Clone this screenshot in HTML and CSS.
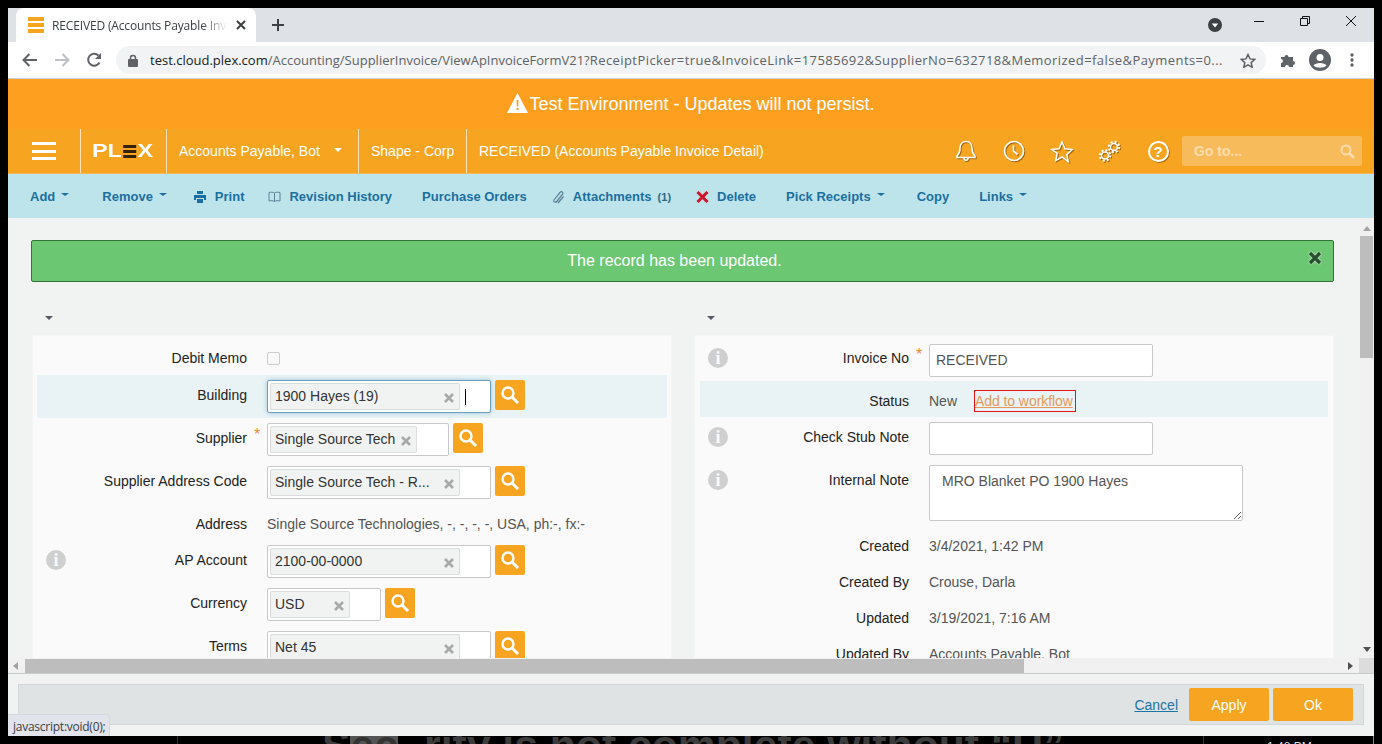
FILE: index.html
```html
<!DOCTYPE html>
<html lang="en">
<head>
    <meta charset="UTF-8">
    <title>RECEIVED (Accounts Payable Invoice Detail)</title>
    <link rel="stylesheet" href="styles.css">
</head>
<body>

<div class="window">

    <!-- browser tabs -->
    <div class="tabstrip">
        <div class="tab">
            <span class="favicon"><i></i><i></i><i></i></span>
            <span class="tab-title">RECEIVED (Accounts Payable Invoice Detail)</span>
            <svg class="tab-close" width="10" height="10" viewBox="0 0 10 10"><path d="M1 1l8 8M9 1l-8 8" stroke="#3c4043" stroke-width="2"/></svg>
        </div>
        <svg class="new-tab" width="14" height="14" viewBox="0 0 14 14"><path d="M7 1v12M1 7h12" stroke="#3c4043" stroke-width="2"/></svg>
        <svg class="tab-search" width="14" height="14" viewBox="0 0 14 14"><circle cx="7" cy="7" r="7" fill="#3c4043"/><path d="M3.8 5.5h6.4L7 9.6z" fill="#fff"/></svg>
        <svg class="win-btn" width="46" height="14" viewBox="0 0 46 14"><path d="M18 7.5h10" stroke="#111" stroke-width="1"/></svg>
        <svg class="win-btn" width="46" height="14" viewBox="0 0 46 14"><path d="M18.5 4.5h7v7h-7zM20.5 4.500v-2h7v7h-2" fill="none" stroke="#111"/></svg>
        <svg class="win-btn" width="46" height="14" viewBox="0 0 46 14"><path d="M18 2l10 10M28 2L18 12" stroke="#111"/></svg>
    </div>

    <!-- browser toolbar -->
    <div class="toolbar">
        <svg class="tool" width="16" height="14" viewBox="0 0 16 14"><path d="M15 7H2M7.500 1L1.500 7l6 6" fill="none" stroke="#5f6368" stroke-width="2"/></svg>
        <svg class="tool tool-forward" width="16" height="14" viewBox="0 0 16 14"><path d="M1 7h13M8.500 1l6 6-6 6" fill="none" stroke="#bdc1c6" stroke-width="2"/></svg>
        <svg class="tool tool-reload" width="16" height="16" viewBox="0 0 16 16"><path d="M13.500 10.500A6 6 0 1 1 12.500 3.500" fill="none" stroke="#5f6368" stroke-width="2"/><path d="M15 1v6H9z" fill="#5f6368"/></svg>
        <div class="address">
            <svg class="lock" width="10" height="13" viewBox="0 0 10 13"><path d="M2.500 6V4a2.500 2.500 0 0 1 5 0v2" fill="none" stroke="#5f6368" stroke-width="1.500"/><rect y="5" width="10" height="8" rx="1" fill="#5f6368"/></svg>
            <span class="url"><b>test.cloud.plex.com</b>/Accounting/SupplierInvoice/ViewApInvoiceFormV21?<span class="url-query">ReceiptPicker=true&amp;InvoiceLink=17585692&amp;SupplierNo=632718&amp;Memorized=false&amp;Payments=0...</span></span>
            <svg class="addr-star" width="16" height="15" viewBox="0 0 16 15"><path d="M8 1.500l2 4.400 4.800.5-3.600 3.200 1 4.700L8 11.900l-4.200 2.400 1-4.700L1.200 6.400 6 5.900z" fill="none" stroke="#5f6368" stroke-width="1.500"/></svg>
        </div>
        <svg class="tool tool-puzzle" width="16" height="16" viewBox="0 0 16 16"><path d="M1 5h3.500a2 2 0 1 1 4 0H13v4a2 2 0 1 1 0 4v2H9a2 2 0 1 0-4 0H1v-4a2 2 0 1 0 0-4z" fill="#5f6368"/></svg>
        <svg class="tool tool-avatar" width="22" height="22" viewBox="0 0 22 22"><circle cx="11" cy="11" r="11" fill="#5f6368"/><circle cx="11" cy="8.500" r="3.500" fill="#fff"/><path d="M4.500 16.500c2-3.500 11-3.500 13 0-3 3-10 3-13 0z" fill="#fff"/></svg>
        <svg class="tool tool-dots" width="4" height="14" viewBox="0 0 4 14"><circle cx="2" cy="2" r="1.700" fill="#5f6368"/><circle cx="2" cy="7" r="1.700" fill="#5f6368"/><circle cx="2" cy="12" r="1.700" fill="#5f6368"/></svg>
    </div>

    <div class="env-banner">
        <svg width="21" height="20" viewBox="0 0 21 20"><path d="M10.500 0L21 20H0z" fill="#fff"/><path d="M9.500 7h2l-.3 6.500H9.800zM9.500 15h2v2h-2z" fill="#ff9f20"/></svg>
        <span>Test Environment - Updates will not persist.</span>
    </div>

    <!-- plex header -->
    <div class="nav">
        <div class="nav-menu"><i></i><i></i><i></i></div>
        <div class="nav-logo"><span class="logo-inner">PL<span class="logo-e"><i></i><i></i><i></i></span>X</span></div>
        <div class="nav-user">Accounts Payable, Bot <span class="caret caret-white"></span></div>
        <div class="nav-item nav-shape">Shape - Corp</div>
        <div class="nav-item nav-title">RECEIVED (Accounts Payable Invoice Detail)</div>
        <div class="nav-icons">
            <span class="nav-icon"><svg width="22" height="24" viewBox="0 0 22 24"><path d="M11 2.500c-4 0-6 3-6 6.500 0 4-1 6-3 8v1.500h18V17c-2-2-3-4-3-8 0-3.500-2-6.500-6-6.500zM9 19c0 3 4 3 4 0" fill="none" stroke="#fff" stroke-width="1.500"/></svg></span>
            <span class="nav-icon"><svg width="22" height="22" viewBox="0 0 22 22"><circle cx="11" cy="11" r="9.500" fill="none" stroke="#fff" stroke-width="1.700"/><path d="M10.500 5.500V11l4 3.500" fill="none" stroke="#fff" stroke-width="1.700"/></svg></span>
            <span class="nav-icon"><svg width="24" height="23" viewBox="0 0 24 23"><path d="M12 2l3 6.700 7.200.8-5.400 4.900 1.500 7.200L12 17l-6.300 3.600 1.500-7.200L1.800 9.500 9 8.700z" fill="none" stroke="#fff" stroke-width="1.500"/></svg></span>
            <span class="nav-icon"><svg width="24" height="24" viewBox="0 0 24 24"><g fill="none" stroke="#fff"><circle cx="16" cy="8" r="3.500" stroke-width="1.500"/><circle cx="16" cy="8" r="5.200" stroke-width="2" stroke-dasharray="2 2.080"/><circle cx="7" cy="16.500" r="3.500" stroke-width="1.500"/><circle cx="7" cy="16.500" r="5.200" stroke-width="2" stroke-dasharray="2 2.080"/></g></svg></span>
            <span class="nav-icon"><span class="help">?</span></span>
        </div>
        <div class="goto">
            <span>Go to...</span>
            <svg width="15" height="15" viewBox="0 0 15 15"><circle cx="6" cy="6" r="4.500" fill="none" stroke="#fbdcae" stroke-width="2"/><path d="M9.500 9.500L14 14" stroke="#fbdcae" stroke-width="2.500"/></svg>
        </div>
    </div>

    <!-- page actions -->
    <div class="actions">
        <a class="action action-first">Add <span class="caret"></span></a>
        <a class="action">Remove <span class="caret"></span></a>
        <a class="action action-icon action-print"><svg width="12" height="12" viewBox="0 0 12 12"><path d="M3 0h6v3H3zM0 4h12v5h-2V7H2v2H0zM3 8h6v4H3z" fill="#1b6f9f"/></svg>Print</a>
        <a class="action action-icon"><svg width="13" height="11" viewBox="0 0 13 11"><path d="M6.500 2C5 1 3 1 1 1.500V10c2-.5 4-.5 5.500.5 1.500-1 3.500-1 5.500-.5V1.500C10 1 8 1 6.500 2zV10" fill="none" stroke="#5c8296"/></svg>Revision History</a>
        <a class="action">Purchase Orders</a>
        <a class="action action-icon"><svg width="13" height="14" viewBox="0 0 13 14"><path d="M4 12.500L10.500 4.500c1.500-2-1-3.800-2.500-2L2 10c-1 1.500 1 3 2.500 1.500l6-7.500M6 13l5.500-6.500" fill="none" stroke="#5c8296" stroke-width="1.200"/></svg>Attachments <small class="count">(1)</small></a>
        <a class="action action-icon"><svg width="13" height="12" viewBox="0 0 13 12"><path d="M1.500 1l10 10M11.500 1l-10 10" stroke="#d0152a" stroke-width="3"/></svg>Delete</a>
        <a class="action">Pick Receipts <span class="caret"></span></a>
        <a class="action">Copy</a>
        <a class="action">Links <span class="caret"></span></a>
    </div>

    <div class="main">
        <div class="main-top">
            <div class="scroll-body">
                <div class="alert">
                    <span>The record has been updated.</span>
                    <svg class="alert-close" width="14" height="14" viewBox="0 0 14 14"><path d="M2 2l10 10M12 2L2 12" stroke="#294d2f" stroke-width="3.200"/></svg>
                </div>

                <div class="columns">
                    <div class="col">
                        <div class="col-head"><span class="caret caret-dark"></span></div>
                        <div class="panel">
                            <div class="row row-check">
                                <label class="label">Debit Memo</label>
                                <div class="value"><input class="check" type="checkbox"></div>
                            </div>
                            <div class="row row-hl">
                                <label class="label">Building</label>
                                <div class="value picker">
                                    <div class="field field-focus">
                                        <span class="token token-wide">1900 Hayes (19)<svg class="x" width="10" height="10" viewBox="0 0 10 10"><path d="M1 1l8 8M9 1L1 9" stroke="#a9a9a9" stroke-width="2.600"/></svg></span>
                                        <i class="text-cursor"></i>
                                    </div>
                                    <span class="search"><svg width="20" height="20" viewBox="0 0 20 20"><circle cx="8" cy="8" r="5.500" fill="none" stroke="#fff" stroke-width="2.400"/><path d="M12 12l6 6" stroke="#fff" stroke-width="3"/></svg></span>
                                </div>
                            </div>
                            <div class="row">
                                <label class="label">Supplier</label>
                                <span class="req">*</span>
                                <div class="value picker">
                                    <div class="field field-supplier">
                                        <span class="token token-supplier">Single Source Tech<svg class="x" width="10" height="10" viewBox="0 0 10 10"><path d="M1 1l8 8M9 1L1 9" stroke="#a9a9a9" stroke-width="2.600"/></svg></span>
                                    </div>
                                    <span class="search"><svg width="20" height="20" viewBox="0 0 20 20"><circle cx="8" cy="8" r="5.500" fill="none" stroke="#fff" stroke-width="2.400"/><path d="M12 12l6 6" stroke="#fff" stroke-width="3"/></svg></span>
                                </div>
                            </div>
                            <div class="row">
                                <label class="label">Supplier Address Code</label>
                                <div class="value picker">
                                    <div class="field">
                                        <span class="token token-wide">Single Source Tech - R...<svg class="x" width="10" height="10" viewBox="0 0 10 10"><path d="M1 1l8 8M9 1L1 9" stroke="#a9a9a9" stroke-width="2.600"/></svg></span>
                                    </div>
                                    <span class="search"><svg width="20" height="20" viewBox="0 0 20 20"><circle cx="8" cy="8" r="5.500" fill="none" stroke="#fff" stroke-width="2.400"/><path d="M12 12l6 6" stroke="#fff" stroke-width="3"/></svg></span>
                                </div>
                            </div>
                            <div class="row row-text">
                                <label class="label">Address</label>
                                <div class="value value-text">Single Source Technologies, -, -, -, -, USA, ph:-, fx:-</div>
                            </div>
                            <div class="row">
                                <span class="info">i</span>
                                <label class="label">AP Account</label>
                                <div class="value picker">
                                    <div class="field">
                                        <span class="token token-wide">2100-00-0000<svg class="x" width="10" height="10" viewBox="0 0 10 10"><path d="M1 1l8 8M9 1L1 9" stroke="#a9a9a9" stroke-width="2.600"/></svg></span>
                                    </div>
                                    <span class="search"><svg width="20" height="20" viewBox="0 0 20 20"><circle cx="8" cy="8" r="5.500" fill="none" stroke="#fff" stroke-width="2.400"/><path d="M12 12l6 6" stroke="#fff" stroke-width="3"/></svg></span>
                                </div>
                            </div>
                            <div class="row">
                                <label class="label">Currency</label>
                                <div class="value picker">
                                    <div class="field field-currency">
                                        <span class="token token-currency">USD<svg class="x" width="10" height="10" viewBox="0 0 10 10"><path d="M1 1l8 8M9 1L1 9" stroke="#a9a9a9" stroke-width="2.600"/></svg></span>
                                    </div>
                                    <span class="search"><svg width="20" height="20" viewBox="0 0 20 20"><circle cx="8" cy="8" r="5.500" fill="none" stroke="#fff" stroke-width="2.400"/><path d="M12 12l6 6" stroke="#fff" stroke-width="3"/></svg></span>
                                </div>
                            </div>
                            <div class="row">
                                <label class="label">Terms</label>
                                <div class="value picker">
                                    <div class="field">
                                        <span class="token token-wide">Net 45<svg class="x" width="10" height="10" viewBox="0 0 10 10"><path d="M1 1l8 8M9 1L1 9" stroke="#a9a9a9" stroke-width="2.600"/></svg></span>
                                    </div>
                                    <span class="search"><svg width="20" height="20" viewBox="0 0 20 20"><circle cx="8" cy="8" r="5.500" fill="none" stroke="#fff" stroke-width="2.400"/><path d="M12 12l6 6" stroke="#fff" stroke-width="3"/></svg></span>
                                </div>
                            </div>
                        </div>
                    </div>

                    <div class="col col-right">
                        <div class="col-head"><span class="caret caret-dark"></span></div>
                        <div class="panel">
                            <div class="row row-invoice">
                                <span class="info">i</span>
                                <label class="label">Invoice No</label>
                                <span class="req">*</span>
                                <div class="value"><input class="input" type="text" value="RECEIVED"></div>
                            </div>
                            <div class="row row-hl row-status">
                                <label class="label">Status</label>
                                <div class="value value-text">New <a class="workflow">Add to workflow</a></div>
                            </div>
                            <div class="row">
                                <span class="info">i</span>
                                <label class="label">Check Stub Note</label>
                                <div class="value"><input class="input" type="text"></div>
                            </div>
                            <div class="row row-note">
                                <span class="info">i</span>
                                <label class="label">Internal Note</label>
                                <div class="value"><textarea class="note">MRO Blanket PO 1900 Hayes</textarea></div>
                            </div>
                            <div class="row row-text">
                                <label class="label">Created</label>
                                <div class="value value-text">3/4/2021, 1:42 PM</div>
                            </div>
                            <div class="row row-text">
                                <label class="label">Created By</label>
                                <div class="value value-text">Crouse, Darla</div>
                            </div>
                            <div class="row row-text">
                                <label class="label">Updated</label>
                                <div class="value value-text">3/19/2021, 7:16 AM</div>
                            </div>
                            <div class="row row-text">
                                <label class="label">Updated By</label>
                                <div class="value value-text">Accounts Payable, Bot</div>
                            </div>
                        </div>
                    </div>
                </div>
            </div>
            <div class="vscroll">
                <span class="arrow-up"></span>
                <span class="vthumb"></span>
                <span class="arrow-down"></span>
            </div>
        </div>
        <div class="hscroll">
            <span class="arrow-left"></span>
            <span class="hthumb"></span>
            <span class="arrow-right"></span>
            <span class="corner"></span>
        </div>
    </div>

    <div class="footer">
        <div class="footer-bar">
            <a class="cancel">Cancel</a>
            <button class="btn">Apply</button>
            <button class="btn btn-ok">Ok</button>
        </div>
    </div>

    <div class="status-tip">javascript:void(0);</div>
</div>

<!-- what is left of the window behind -->
<div class="behind">
    <span class="behind-line behind-line1"></span>
    <span class="behind-text">S<span class="behind-mark">ec</span><span class="behind-hid">u</span>rity is not complete without “U”</span>
    <span class="behind-line"></span>
    <span class="behind-time">1:48 PM</span>
    <span class="behind-line behind-line3"></span>
</div>

</body>
</html>
```

FILE: styles.css
```css
* {
    box-sizing: border-box;
}
html, body {
    height: 744px;
    margin: 0;
    overflow: hidden;
}
body {
    background: #000;
    font-family: "Liberation Sans", Arial, sans-serif;
    font-size: 14px;
    color: #222;
}
a {
    cursor: pointer;
}
.window {
    position: relative;
    display: flex;
    flex-direction: column;
    height: 728px;
    margin: 8px 8px 0;
    background: #f1f3f3;
}

/* browser tabs */
.tabstrip {
    display: flex;
    align-items: center;
    height: 34px;
    padding-left: 8px;
    background: #dee1e6;
}
.tab {
    display: flex;
    align-items: center;
    width: 240px;
    height: 34px;
    padding: 0 10px 0 12px;
    background: #fff;
    border-radius: 8px 8px 0 0;
}
.favicon {
    display: flex;
    flex-direction: column;
    justify-content: space-between;
    width: 16px;
    height: 16px;
    flex: none;
}
.favicon i {
    display: block;
    height: 4px;
    background: #f7a521;
}
.tab-title {
    flex: 1;
    margin-left: 8px;
    overflow: hidden;
    white-space: nowrap;
    font-family: "Open Sans", sans-serif;
    font-size: 12px;
    letter-spacing: -0.15px;
    color: #3c4043;
    mask-image: linear-gradient(to right, #000 85%, transparent 100%);
}
.tab-close {
    margin-left: 8px;
    flex: none;
}
.new-tab {
    margin-left: 15px;
}
.tab-search {
    margin-left: auto;
    margin-right: 14px;
}
.win-btn {
    margin-bottom: 9px;
}

/* browser toolbar */
.toolbar {
    display: flex;
    align-items: center;
    height: 37px;
    background: #fff;
    border-bottom: 1px solid #d0d3d9;
}
.tool {
    flex: none;
    margin-left: 14px;
}
.tool-forward {
    margin-left: 16px;
}
.tool-reload {
    margin-left: 16px;
}
.address {
    display: flex;
    align-items: center;
    width: 1150px;
    height: 28px;
    margin-left: 14px;
    padding: 0 10px 0 12px;
    background: #f1f3f4;
    border-radius: 14px;
}
.lock {
    flex: none;
}
.url {
    flex: 1;
    margin-left: 12px;
    white-space: nowrap;
    overflow: hidden;
    font-family: "Open Sans", sans-serif;
    font-size: 13px;
    color: #5f6368;
}
.url b {
    font-weight: normal;
    color: #202124;
}
.url-query {
    letter-spacing: 0.43px;
}
.addr-star {
    flex: none;
}
.tool-puzzle {
    margin-left: 14px;
}
.tool-avatar {
    margin-left: 13px;
}
.tool-dots {
    margin-left: 19px;
}

.env-banner {
    display: flex;
    align-items: center;
    justify-content: center;
    height: 50px;
    background: #ff9f20;
    color: #fff;
    font-size: 18px;
}
.env-banner svg {
    margin: 0 1px 3px 0;
}

/* plex header */
.nav {
    display: flex;
    align-items: stretch;
    height: 45px;
    background: #f7a521;
    color: #fff;
    border-bottom: 1px solid #f4b759;
}
.nav-menu {
    display: flex;
    flex-direction: column;
    justify-content: space-between;
    width: 72px;
    padding: 13px 24px 13px 24px;
}
.nav-menu i {
    display: block;
    height: 3px;
    background: #fff;
}
.nav-logo, .nav-user, .nav-item {
    display: flex;
    align-items: center;
    border-left: 1px solid #fde3bb;
}
.nav-logo {
    width: 86px;
    padding-left: 11px;
}
.logo-inner {
    display: flex;
    align-items: center;
    font-size: 18px;
    font-weight: bold;
    transform: scaleX(1.3);
    transform-origin: left center;
    line-height: 1;
}
.logo-e {
    display: flex;
    flex-direction: column;
    justify-content: space-between;
    width: 10px;
    height: 13px;
    margin: 0 1px;
}
.logo-e i {
    display: block;
    height: 3px;
    background: #33220b;
}
.nav-user {
    width: 192px;
    padding-left: 12px;
}
.nav-user .caret {
    margin-left: 14px;
    margin-bottom: 3px;
}
.nav-shape {
    width: 108px;
    padding-left: 12px;
}
.nav-title {
    padding-left: 12px;
}
.nav-icons {
    display: flex;
    margin-left: auto;
}
.nav-icon {
    display: flex;
    align-items: center;
    justify-content: center;
    width: 48px;
}
.nav-icon svg {
    filter: drop-shadow(1px 1px 0 rgba(90, 50, 0, 0.55));
}
.help {
    display: block;
    width: 21px;
    height: 21px;
    border: 2px solid #fff;
    border-radius: 50%;
    text-align: center;
    font-size: 15px;
    line-height: 17px;
    font-weight: bold;
    box-shadow: 1px 1px 0 rgba(90, 50, 0, 0.5);
}
.goto {
    display: flex;
    align-items: center;
    justify-content: space-between;
    width: 180px;
    height: 30px;
    margin: 7px 12px 0 0;
    padding: 0 7px 0 12px;
    background: #f8bb5c;
    border-radius: 2px;
    color: #fcdcae;
    font-weight: bold;
}
.caret {
    display: inline-block;
    width: 0;
    height: 0;
    border-left: 4px solid transparent;
    border-right: 4px solid transparent;
    border-top: 4px solid #1b6f9f;
    vertical-align: 3px;
    margin-left: 4px;
}
.caret-white {
    border-top-color: #fff;
}
.caret-dark {
    border-top-color: #555b66;
}

/* page actions */
.actions {
    display: flex;
    align-items: center;
    height: 44px;
    padding-top: 1px;
    background: #bee4eb;
    font-size: 13px;
    font-weight: bold;
    white-space: nowrap;
    color: #1b6f9f;
}
.action {
    display: flex;
    align-items: center;
    margin-left: 30px;
}
.action .caret {
    margin: 0 2px 4px 6px;
    border-top-width: 3px;
}
.action-first {
    margin-left: 22px;
}
.action-first .caret {
    margin-right: 3px;
}
.action-icon {
    margin-left: 25px;
}
.action-icon svg {
    margin-right: 8px;
}
.action-print {
    margin-right: -1px;
}
.action-print svg {
    margin-right: 9px;
}
.count {
    margin-left: 6px;
    font-size: 11px;
    color: #2c6a88;
}

/* scrolling part */
.main {
    display: flex;
    flex-direction: column;
    height: 455px;
}
.main-top {
    display: flex;
    height: 440px;
}
.scroll-body {
    flex: 1;
    overflow: hidden;
    padding-top: 22px;
}
.alert {
    display: flex;
    align-items: center;
    justify-content: center;
    position: relative;
    width: 1303px;
    height: 42px;
    padding-right: 16px;
    margin-left: 23px;
    background: #6cc773;
    border: 1px solid #33713b;
    border-radius: 2px;
    color: #fff;
    font-size: 16px;
}
.alert-close {
    position: absolute;
    right: 11px;
    top: 10px;
    filter: drop-shadow(0 0 1px #e6f5e6);
}
.columns {
    display: flex;
    gap: 22px;
    margin-left: 24px;
}
.col {
    width: 640px;
    flex: none;
}
.col-head {
    height: 53px;
    padding: 34px 0 0 13px;
}
.col-head .caret {
    display: block;
    margin: 0;
}
.panel {
    padding: 2px 4px 0;
    background: #fafafa;
    border: 1px solid #f4f5f5;
    height: 340px;
}
.row {
    display: grid;
    grid-template-columns: 9px 20px 181px 20px 1fr;
    height: 43px;
    margin: 0;
}
.row-check {
    height: 37px;
}
.row-hl {
    background: #e9f3f5;
}
.col-right .row-hl {
    clip-path: inset(0 1px);
}
.row-text {
    height: 36px;
}
.row-status {
    height: 36px;
}
.row-note {
    height: 66px;
}
.label {
    grid-column: 3;
    grid-row: 1;
    padding-top: 10px;
    line-height: 20px;
    text-align: right;
    white-space: nowrap;
    justify-self: end;
}
.req {
    grid-column: 4;
    grid-row: 1;
    padding: 9px 0 0 7px;
    color: #e98a3d;
    font-size: 16px;
    line-height: 16px;
}
.info {
    grid-column: 2;
    grid-row: 1;
    width: 20px;
    height: 20px;
    margin-top: 10px;
    border-radius: 50%;
    background: #cfcfcf;
    color: #fafafa;
    text-align: center;
    font-family: "Liberation Serif", serif;
    font-size: 18px;
    font-weight: bold;
    line-height: 20px;
}
.value {
    grid-column: 5;
    grid-row: 1;
    padding-top: 5px;
}
.value-text {
    padding-top: 10px;
    line-height: 20px;
    color: #555;
}
.check {
    display: block;
    width: 13px;
    height: 13px;
    margin: 9px 0 0;
    appearance: none;
    background: #f8f8f8;
    border: 1px solid #ccc;
    border-radius: 2px;
}
.picker {
    display: flex;
    align-items: flex-start;
}
.field {
    display: flex;
    align-items: center;
    width: 224px;
    height: 33px;
    padding: 2px;
    background: #fff;
    border: 1px solid #c9c9c9;
    border-radius: 2px;
}
.field-focus {
    border-color: #6c9fc0;
    box-shadow: 0 0 5px #9cc4da;
}
.field-supplier {
    width: 182px;
}
.field-currency {
    width: 114px;
}
.token {
    display: flex;
    align-items: center;
    justify-content: space-between;
    height: 27px;
    padding: 0 5px 2px 4px;
    background: #f1f3f3;
    border: 1px solid #dadddd;
    border-radius: 2px;
    color: #333;
    white-space: nowrap;
}
.token-wide {
    width: 190px;
}
.token-supplier {
    width: 147px;
}
.token-currency {
    width: 80px;
}
.x {
    flex: none;
    margin-top: 4px;
}
.text-cursor {
    display: block;
    width: 1px;
    height: 16px;
    margin-left: 5px;
    background: #000;
}
.search {
    display: flex;
    align-items: center;
    justify-content: center;
    width: 30px;
    height: 30px;
    margin-left: 4px;
    background: #f7a521;
    border-radius: 2px;
}
.input {
    display: block;
    width: 224px;
    height: 33px;
    padding: 0 6px 2px;
    background: #fff;
    border: 1px solid #c9c9c9;
    border-radius: 2px;
    outline: none;
    font: 14px "Liberation Sans", sans-serif;
    color: #555;
}
.row-invoice .value {
    padding-top: 6px;
}
.note {
    display: block;
    width: 314px;
    height: 56px;
    padding: 7px 12px;
    background: #fff;
    border: 1px solid #c9c9c9;
    border-radius: 2px;
    outline: none;
    font: 14px "Liberation Sans", sans-serif;
    color: #555;
}
.workflow {
    display: inline-block;
    margin-left: 14px;
    width: 100px;
    outline: 1px solid #e81313;
    line-height: 20px;
    color: #e8985a;
    text-decoration: underline;
    letter-spacing: -0.06px;
    white-space: nowrap;
}

/* scrollbars */
.vscroll {
    display: flex;
    flex-direction: column;
    align-items: center;
    width: 15px;
    padding-top: 8px;
    background: #f1f1f1;
}
.arrow-up {
    border-left: 4px solid transparent;
    border-right: 4px solid transparent;
    border-bottom: 5px solid #a3a3a3;
}
.vthumb {
    width: 13px;
    height: 122px;
    margin-top: 5px;
    background: #bdbdbd;
}
.arrow-down {
    margin-top: auto;
    margin-bottom: 6px;
    border-left: 4px solid transparent;
    border-right: 4px solid transparent;
    border-top: 5px solid #505050;
}
.hscroll {
    display: flex;
    align-items: center;
    height: 15px;
    background: #f1f1f1;
}
.arrow-left {
    margin-left: 5px;
    border-top: 4px solid transparent;
    border-bottom: 4px solid transparent;
    border-right: 5px solid #a3a3a3;
}
.hthumb {
    width: 999px;
    height: 14px;
    margin-left: 7px;
    background: #bdbdbd;
}
.arrow-right {
    margin-left: auto;
    margin-right: 6px;
    border-top: 4px solid transparent;
    border-bottom: 4px solid transparent;
    border-left: 5px solid #505050;
}
.corner {
    width: 15px;
    height: 15px;
    background: #dcdcdc;
}

/* dialog buttons */
.footer {
    height: 63px;
    padding: 10px 10px 11px;
    background: #f1f3f3;
    border-top: 1px solid #c8cbcb;
}
.footer-bar {
    display: flex;
    align-items: center;
    justify-content: flex-end;
    height: 41px;
    padding: 0 10px;
    background: #dfe3e4;
    border: 1px solid #d3d7d8;
}
.cancel {
    margin-right: 11px;
    color: #1b75a5;
    text-decoration: underline;
}
.btn {
    width: 80px;
    height: 33px;
    background: #f7a521;
    border: none;
    border-radius: 2px;
    color: #fff;
    font: 14px "Liberation Sans", sans-serif;
}
.btn-ok {
    margin-left: 4px;
}
.status-tip {
    position: absolute;
    left: 0;
    bottom: 0;
    width: 102px;
    height: 22px;
    padding: 3px 0 0 5px;
    background: #e1e4ea;
    border: 1px solid #d4d7dc;
    border-left: none;
    border-bottom: none;
    border-radius: 0 4px 0 0;
    font-family: "Open Sans", sans-serif;
    font-size: 12px;
    letter-spacing: -0.25px;
    color: #3c4043;
    white-space: nowrap;
}

/* bit of the other window under this one */
.behind {
    display: flex;
    height: 8px;
    overflow: hidden;
    white-space: nowrap;
    color: #3c3c3c;
}
.behind-line {
    width: 1px;
    height: 8px;
    background: #333;
    flex: none;
}
.behind-line1 {
    margin-left: 177px;
}
.behind-text {
    width: 881px;
    margin: -14px 0 0 144px;
    flex: none;
    font-size: 42.7px;
    font-weight: bold;
    line-height: 46px;
}
.behind-mark {
    background: #555;
    color: #333;
}
.behind-hid {
    color: #000;
}
.behind-time {
    margin-left: 63px;
    font-size: 12px;
    line-height: 14px;
    margin-top: 4px;
    color: #ddd;
}
.behind-line3 {
    margin-left: auto;
    margin-right: 8px;
    background: #888;
}
```
